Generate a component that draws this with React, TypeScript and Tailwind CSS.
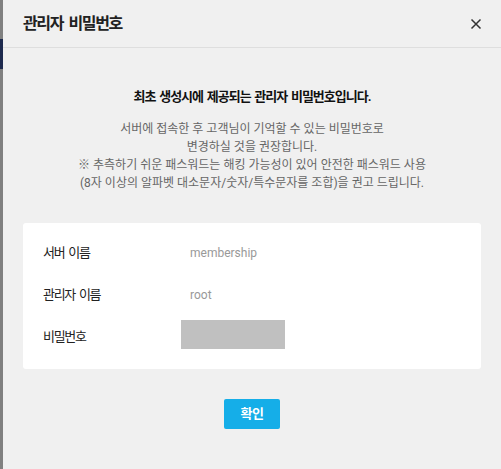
import React from 'react';

const rows = [
  { label: '서버 이름', value: 'membership' },
  { label: '관리자 이름', value: 'root' },
];

export default function App() {
  return (
    <div
      className="flex h-[469px] w-[501px] overflow-hidden bg-[#f0f0f0] text-[#222]"
      style={{ fontFamily: 'Roboto, "Noto Sans CJK KR", "Noto Sans", sans-serif' }}
    >
      {/* page behind the dialog */}
      <div className="flex w-[3px] shrink-0 flex-col bg-[#808080]">
        <div className="h-[39px]" />
        <div className="h-[30px] bg-[#1e2a4e]" />
      </div>

      <div className="flex flex-1 flex-col">
        <div className="flex h-[48px] items-center justify-between border-b border-[#dedede] pl-[20px] pr-[19px]">
          <span className="text-[16px] font-bold leading-none tracking-[-1.4px] text-[#222] [word-spacing:3px]">
            관리자 비밀번호
          </span>
          <svg width="12" height="12" viewBox="0 0 12 12" className="mt-[1px]">
            <path d="M1.5 1.5 L10.5 10.5 M10.5 1.5 L1.5 10.5" stroke="#333" strokeWidth="1.5" />
          </svg>
        </div>

        <div className="flex flex-col items-center pt-[40px]">
          <p className="text-[13px] font-bold leading-[18px] tracking-[-1px] text-[#111] [word-spacing:1.5px]">
            최초 생성시에 제공되는 관리자 비밀번호입니다.
          </p>
          <p className="mt-[14px] text-center text-[12px] leading-[18px] text-[#666]">
            서버에 접속한 후 고객님이 기억할 수 있는 비밀번호로
            <br />
            변경하실 것을 권장합니다.
            <br />※ 추측하기 쉬운 패스워드는 해킹 가능성이 있어 안전한 패스워드 사용
            <br />
            (8자 이상의 알파벳 대소문자/숫자/특수문자를 조합)을 권고 드립니다.
          </p>
        </div>

        <div className="mx-[20px] mt-[31px] h-[146px] rounded-[3px] bg-white px-[20px] pt-[9px]">
          {rows.map(r => (
            <div key={r.label} className="flex h-[42px] items-center">
              <span className="w-[138px] text-[13px] tracking-[-1.3px] text-[#222] [word-spacing:2px]">{r.label}</span>
              <span className="pl-[9px] text-[12px] text-[#999]">{r.value}</span>
            </div>
          ))}
          <div className="flex h-[42px] items-center">
            <span className="w-[138px] text-[13px] tracking-[-1.3px] text-[#222]">비밀번호</span>
            <div className="-mt-[5px] h-[29px] w-[104px] bg-[#c0c0c0]" />
          </div>
        </div>

        <div className="mt-[30px] flex justify-center">
          <button className="h-[30px] w-[56px] rounded-[2px] bg-[#15aee8] text-[13px] font-bold tracking-[-0.5px] text-white">
            확인
          </button>
        </div>
      </div>
    </div>
  );
}
